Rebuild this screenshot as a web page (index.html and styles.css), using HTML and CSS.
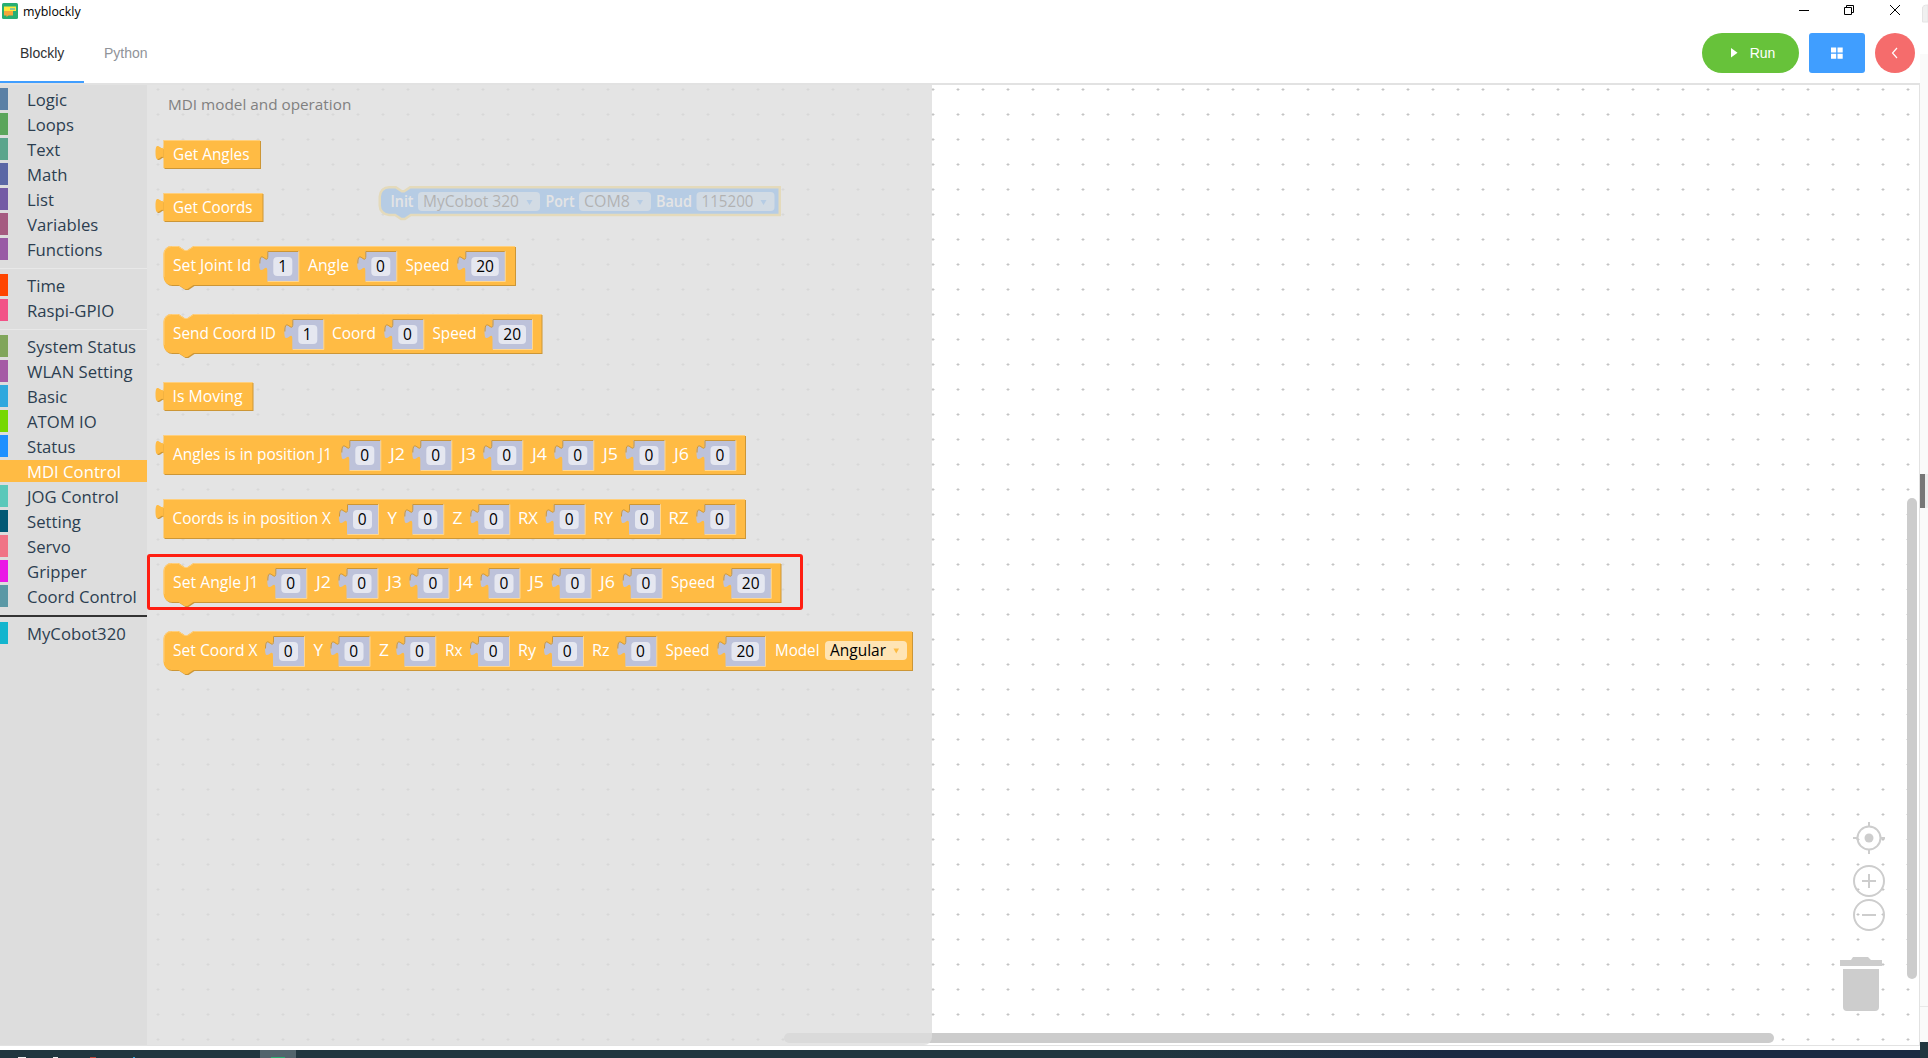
FILE: index.html
```
<!DOCTYPE html>
<html lang="en">
<head>
<meta charset="utf-8">
<title>myblockly</title>
<link rel="stylesheet" href="styles.css">
</head>
<body>
<svg class="defs" width="0" height="0" aria-hidden="true">
  <defs>
    <pattern id="grid" x="-4.5" y="2" width="25" height="25" patternUnits="userSpaceOnUse">
      <path d="M11 12.5h3M12.5 11v3" stroke="#c4c4c4" stroke-width="1"/>
    </pattern>
    <g id="tab"><path d="M0 20c0-10-8 8-8-7.5s8 2.5 8-7.5z"/></g>
    <g id="slot1">
      <path class="slot" d="M0 5H31.5V35.5H0V25c0-10-8 8-8-7.5s8 2.5 8-7.5z"/>
      <path class="slot-dark" d="M31 5.5H.5V10c0 10-8-8-8 7.5"/>
      <path class="slot-light" d="M.5 35.5H31.5V5.5"/>
      <rect class="slot-field" x="6" y="11" width="19" height="19" rx="4"/>
    </g>
    <g id="slot2">
      <path class="slot" d="M0 5H40V35.5H0V25c0-10-8 8-8-7.5s8 2.5 8-7.5z"/>
      <path class="slot-dark" d="M39.500 5.500H.5V10c0 10-8-8-8 7.500"/>
      <path class="slot-light" d="M.5 35.5H40V5.5"/>
      <rect class="slot-field" x="6" y="11" width="27.500" height="19" rx="4"/>
    </g>
  </defs>
</svg>
<div class="desktop">
<div class="app">
  <header class="titlebar">
    <svg class="logo" width="16" height="16" viewBox="0 0 16 16">
      <rect width="16" height="16" rx="1.500" fill="#27ae73"/>
      <path d="M2 3.500h12V8H2z" fill="#ffe93b"/>
      <path d="M2 8h9v4.500H6.500l-2 1.500v-1.500H2z" fill="#f6a63a"/>
      <path d="M8 5h5v2H8z" fill="#8ac79a"/>
    </svg>
    <span class="app-name">myblockly</span>
    <svg class="winbtns" width="104" height="12" viewBox="0 0 104 12" fill="none" stroke="#000">
      <path d="M0 6.500h10"/>
      <path d="M45.500 3.500h7v7h-7zM47.500 3.500v-2h7v7h-2"/>
      <path d="M91 1l10 10M101 1L91 11"/>
    </svg>
  </header>
  <div class="toolbar">
    <nav class="tabs">
      <span class="tab active">Blockly</span>
      <span class="tab">Python</span>
    </nav>
    <div class="actions">
      <button class="btn run">
        <svg width="7" height="10" viewBox="0 0 7 10"><path d="M0 0L6.500 4.700 0 9.500z" fill="#fff"/></svg>
        <span>Run</span>
      </button>
      <button class="btn tiles">
        <svg width="12" height="12" viewBox="0 0 12 12"><path d="M0 .5h5.200v5H0zM6.500.5h5.200v5H6.500zM0 6.700h5.200v5H0zM6.500 6.700h5.200v5H6.500z" fill="#fff"/></svg>
      </button>
      <button class="btn back">
        <svg width="8" height="12" viewBox="0 0 8 12"><path d="M6 1L1.500 6 6 11" fill="none" stroke="#fff" stroke-width="1.200"/></svg>
      </button>
    </div>
  </div>
  <main class="editor">
    <ul class="toolbox">
      <li class="c-logic">Logic</li>
      <li class="c-loops">Loops</li>
      <li class="c-text">Text</li>
      <li class="c-math">Math</li>
      <li class="c-list">List</li>
      <li class="c-vars">Variables</li>
      <li class="c-funcs">Functions</li>
      <li class="sep"></li>
      <li class="c-time">Time</li>
      <li class="c-gpio">Raspi-GPIO</li>
      <li class="sep"></li>
      <li class="c-system">System Status</li>
      <li class="c-wlan">WLAN Setting</li>
      <li class="c-basic">Basic</li>
      <li class="c-atom">ATOM IO</li>
      <li class="c-status">Status</li>
      <li class="c-mdi selected">MDI Control</li>
      <li class="c-jog">JOG Control</li>
      <li class="c-setting">Setting</li>
      <li class="c-servo">Servo</li>
      <li class="c-gripper">Gripper</li>
      <li class="c-coord">Coord Control</li>
      <li class="sep dark"></li>
      <li class="c-cobot">MyCobot320</li>
    </ul>
    <section class="workspace">
      <svg class="canvas" width="1772" height="960" viewBox="147 85 1772 960">
        <rect x="147" y="85" width="1772" height="960" fill="url(#grid)"/>
        <g class="init">
          <path class="init-body" d="M381 196.500a8 8 0 0 1 8-8h6.500l6 4h3l6-4H778.500V213.700H410.500l-6 4h-3l-6-4h-6.500a8 8 0 0 1-8-8z"/>
          <rect class="drop" x="418" y="192" width="122" height="19" rx="4"/>
          <rect class="drop" x="579" y="192" width="72" height="19" rx="4"/>
          <rect class="drop" x="696.500" y="192" width="78" height="19" rx="4"/>
          <path class="init-arrow" d="M526.500 200h6l-3 5zM637 200h6l-3 5zM760.500 200h6l-3 5z"/>
          <text class="bold" x="390.500" y="207" textLength="23" lengthAdjust="spacingAndGlyphs">Init</text>
          <text class="val" x="423" y="207" textLength="96" lengthAdjust="spacingAndGlyphs">MyCobot 320</text>
          <text class="bold" x="545.500" y="207" textLength="29" lengthAdjust="spacingAndGlyphs">Port</text>
          <text class="val" x="584" y="207" textLength="46" lengthAdjust="spacingAndGlyphs">COM8</text>
          <text class="bold" x="656" y="207" textLength="36" lengthAdjust="spacingAndGlyphs">Baud</text>
          <text class="val" x="701.500" y="207" textLength="52" lengthAdjust="spacingAndGlyphs">115200</text>
        </g>
        <g class="controls" fill="none">
          <circle cx="1869" cy="838" r="11.500"/><circle cx="1869" cy="838" r="4.500" class="solid"/>
          <path d="M1869 822v4M1869 850v4M1853 838h4M1881 838h4"/>
          <circle cx="1869" cy="881" r="15"/><path d="M1862 881h14M1869 874v14"/>
          <circle cx="1869" cy="915" r="15"/><path d="M1862 915h14"/>
          <path class="solid" d="M1840 960h11l2-3h15l3 3h11v6h-42zM1843 969h36v38a4 4 0 0 1-4 4h-28a4 4 0 0 1-4-4z"/>
        </g>
        <rect class="bar" x="1907" y="498" width="10" height="481" rx="5"/>
        <rect class="bar" x="784" y="1033" width="990" height="10" rx="5"/>
      </svg>
      <div class="flyout">
        <h2 class="flyout-title">MDI model and operation</h2>

        <svg class="block" width="785" height="29" viewBox="147 0 785 29">
          <g class="body"><path d="M163.500 0H260V28H163.500z"/><use href="#tab" x="163.500"/></g>
          <path class="hi" d="M163.500 .5H260"/>
          <text x="173" y="20" textLength="76.500" lengthAdjust="spacingAndGlyphs">Get Angles</text>
        </svg>

        <svg class="block" width="785" height="29" viewBox="147 0 785 29">
          <g class="body"><path d="M163.500 0H262.500V28H163.500z"/><use href="#tab" x="163.500"/></g>
          <path class="hi" d="M163.500 .5H262.500"/>
          <text x="173" y="20" textLength="79.500" lengthAdjust="spacingAndGlyphs">Get Coords</text>
        </svg>

        <svg class="block" width="785" height="44" viewBox="147 0 785 44">
          <path class="body" d="M163.500 8a8 8 0 0 1 8-8h7l6 4h3l6-4H515V39H193.500l-6 4h-3l-6-4h-7a8 8 0 0 1-8-8z"/>
          <path class="hi" d="M164 31V8a7.500 7.500 0 0 1 7.500-7.500h7l6 4h3l6-4H515"/>
          <use href="#slot1" x="267.300"/><use href="#slot1" x="365.300"/><use href="#slot2" x="465.300"/>
          <text x="173" y="25" textLength="78" lengthAdjust="spacingAndGlyphs">Set Joint Id</text>
          <text class="num" x="282.800" y="26">1</text>
          <text x="308" y="25" textLength="41" lengthAdjust="spacingAndGlyphs">Angle</text>
          <text class="num" x="380.500" y="26">0</text>
          <text x="405.500" y="25" textLength="44" lengthAdjust="spacingAndGlyphs">Speed</text>
          <text class="num" x="485" y="26">20</text>
        </svg>

        <svg class="block" width="785" height="44" viewBox="147 0 785 44">
          <path class="body" d="M163.500 8a8 8 0 0 1 8-8h7l6 4h3l6-4H541.500V39H193.500l-6 4h-3l-6-4h-7a8 8 0 0 1-8-8z"/>
          <path class="hi" d="M164 31V8a7.500 7.500 0 0 1 7.500-7.500h7l6 4h3l6-4H541.500"/>
          <use href="#slot1" x="292.300"/><use href="#slot1" x="392.300"/><use href="#slot2" x="492.500"/>
          <text x="173" y="25" textLength="103" lengthAdjust="spacingAndGlyphs">Send Coord ID</text>
          <text class="num" x="307.300" y="26">1</text>
          <text x="332" y="25" textLength="44" lengthAdjust="spacingAndGlyphs">Coord</text>
          <text class="num" x="407.500" y="26">0</text>
          <text x="432.500" y="25" textLength="44" lengthAdjust="spacingAndGlyphs">Speed</text>
          <text class="num" x="512.200" y="26">20</text>
        </svg>

        <svg class="block" width="785" height="29" viewBox="147 0 785 29">
          <g class="body"><path d="M163.500 0H252.500V28H163.500z"/><use href="#tab" x="163.500"/></g>
          <path class="hi" d="M163.500 .5H252.500"/>
          <text x="172.500" y="20" textLength="70" lengthAdjust="spacingAndGlyphs">Is Moving</text>
        </svg>

        <svg class="block" width="785" height="40" viewBox="147 0 785 40">
          <g class="body"><path d="M163.500 0H745V39H163.500z"/><use href="#tab" x="163.500"/></g>
          <path class="hi" d="M163.500 .5H745"/>
          <use href="#slot1" x="349.300"/><use href="#slot1" x="420.300"/><use href="#slot1" x="491.300"/>
          <use href="#slot1" x="562.300"/><use href="#slot1" x="633.500"/><use href="#slot1" x="704.500"/>
          <text x="173" y="25" textLength="159" lengthAdjust="spacingAndGlyphs">Angles is in position J1</text>
          <text class="num" x="364.800" y="26">0</text>
          <text x="390" y="25" textLength="15" lengthAdjust="spacingAndGlyphs">J2</text>
          <text class="num" x="435.800" y="26">0</text>
          <text x="461" y="25" textLength="15" lengthAdjust="spacingAndGlyphs">J3</text>
          <text class="num" x="506.800" y="26">0</text>
          <text x="532" y="25" textLength="15" lengthAdjust="spacingAndGlyphs">J4</text>
          <text class="num" x="577.800" y="26">0</text>
          <text x="603" y="25" textLength="15" lengthAdjust="spacingAndGlyphs">J5</text>
          <text class="num" x="649" y="26">0</text>
          <text x="674" y="25" textLength="15" lengthAdjust="spacingAndGlyphs">J6</text>
          <text class="num" x="720" y="26">0</text>
        </svg>

        <svg class="block" width="785" height="40" viewBox="147 0 785 40">
          <g class="body"><path d="M163.500 0H745V39H163.500z"/><use href="#tab" x="163.500"/></g>
          <path class="hi" d="M163.500 .5H745"/>
          <use href="#slot1" x="347"/><use href="#slot1" x="412.300"/><use href="#slot1" x="478.300"/>
          <use href="#slot1" x="553.700"/><use href="#slot1" x="629"/><use href="#slot1" x="704.300"/>
          <text x="172.500" y="25" textLength="158.500" lengthAdjust="spacingAndGlyphs">Coords is in position X</text>
          <text class="num" x="362.300" y="26">0</text>
          <text x="387.500" y="25" textLength="9.500" lengthAdjust="spacingAndGlyphs">Y</text>
          <text class="num" x="427.800" y="26">0</text>
          <text x="452.500" y="25" textLength="10" lengthAdjust="spacingAndGlyphs">Z</text>
          <text class="num" x="493.500" y="26">0</text>
          <text x="518" y="25" textLength="20" lengthAdjust="spacingAndGlyphs">RX</text>
          <text class="num" x="569.300" y="26">0</text>
          <text x="593.500" y="25" textLength="19.500" lengthAdjust="spacingAndGlyphs">RY</text>
          <text class="num" x="644.300" y="26">0</text>
          <text x="668.500" y="25" textLength="20" lengthAdjust="spacingAndGlyphs">RZ</text>
          <text class="num" x="719.500" y="26">0</text>
        </svg>

        <svg class="block" width="785" height="44" viewBox="147 0 785 44">
          <path class="body" d="M163.500 8a8 8 0 0 1 8-8h7l6 4h3l6-4H780.500V39H193.500l-6 4h-3l-6-4h-7a8 8 0 0 1-8-8z"/>
          <path class="hi" d="M164 31V8a7.500 7.500 0 0 1 7.500-7.500h7l6 4h3l6-4H780.500"/>
          <use href="#slot1" x="275.300"/><use href="#slot1" x="346.500"/><use href="#slot1" x="417.500"/>
          <use href="#slot1" x="488.500"/><use href="#slot1" x="559.700"/><use href="#slot1" x="630.700"/><use href="#slot2" x="731.300"/>
          <text x="173" y="25" textLength="85.500" lengthAdjust="spacingAndGlyphs">Set Angle J1</text>
          <text class="num" x="290.800" y="26">0</text>
          <text x="316" y="25" textLength="15" lengthAdjust="spacingAndGlyphs">J2</text>
          <text class="num" x="361.800" y="26">0</text>
          <text x="387" y="25" textLength="15" lengthAdjust="spacingAndGlyphs">J3</text>
          <text class="num" x="433" y="26">0</text>
          <text x="458" y="25" textLength="15" lengthAdjust="spacingAndGlyphs">J4</text>
          <text class="num" x="504" y="26">0</text>
          <text x="529" y="25" textLength="15" lengthAdjust="spacingAndGlyphs">J5</text>
          <text class="num" x="575" y="26">0</text>
          <text x="600" y="25" textLength="15" lengthAdjust="spacingAndGlyphs">J6</text>
          <text class="num" x="646" y="26">0</text>
          <text x="671" y="25" textLength="44" lengthAdjust="spacingAndGlyphs">Speed</text>
          <text class="num" x="750.700" y="26">20</text>
        </svg>

        <svg class="block" width="785" height="44" viewBox="147 0 785 44">
          <path class="body" d="M163.500 8a8 8 0 0 1 8-8h7l6 4h3l6-4H912V39H193.500l-6 4h-3l-6-4h-7a8 8 0 0 1-8-8z"/>
          <path class="hi" d="M164 31V8a7.500 7.500 0 0 1 7.500-7.500h7l6 4h3l6-4H912"/>
          <use href="#slot1" x="273"/><use href="#slot1" x="338.500"/><use href="#slot1" x="404.300"/>
          <use href="#slot1" x="478"/><use href="#slot1" x="552"/><use href="#slot1" x="625.300"/><use href="#slot2" x="725.500"/>
          <text x="173" y="25" textLength="84.500" lengthAdjust="spacingAndGlyphs">Set Coord X</text>
          <text class="num" x="288.300" y="26">0</text>
          <text x="313.500" y="25" textLength="9.500" lengthAdjust="spacingAndGlyphs">Y</text>
          <text class="num" x="353.800" y="26">0</text>
          <text x="379" y="25" textLength="10" lengthAdjust="spacingAndGlyphs">Z</text>
          <text class="num" x="419.500" y="26">0</text>
          <text x="445" y="25" textLength="17.500" lengthAdjust="spacingAndGlyphs">Rx</text>
          <text class="num" x="493.300" y="26">0</text>
          <text x="518" y="25" textLength="18" lengthAdjust="spacingAndGlyphs">Ry</text>
          <text class="num" x="567.300" y="26">0</text>
          <text x="592" y="25" textLength="17.500" lengthAdjust="spacingAndGlyphs">Rz</text>
          <text class="num" x="640.500" y="26">0</text>
          <text x="665.500" y="25" textLength="44" lengthAdjust="spacingAndGlyphs">Speed</text>
          <text class="num" x="745.300" y="26">20</text>
          <text x="775" y="25" textLength="44.500" lengthAdjust="spacingAndGlyphs">Model</text>
          <rect x="825" y="10" width="82" height="19" rx="4" fill="#ffe4b4"/>
          <text class="choice" x="830" y="25" textLength="56" lengthAdjust="spacingAndGlyphs">Angular</text>
          <path d="M893.500 17.500h5.500l-2.750 5z" fill="#fdbb42"/>
        </svg>
        <div class="marker"></div>
      </div>
    </section>
  </main>
</div>
<aside class="edge">
  <svg width="8" height="24" viewBox="0 0 8 24"><path d="M2.500 22V8q0-3 5.500-3v17z" fill="#f0f0f0" stroke="#e4e4e4"/></svg>
  <div class="edge-page"><span class="edge-thumb"></span><span class="edge-line"></span></div>
</aside>
<footer class="taskbar">
  <svg width="300" height="8" viewBox="0 0 300 8">
    <rect x="260" width="36" height="8" fill="#52646c"/>
    <path d="M271 7h14v1h-14z" fill="#27ae73"/>
    <path d="M18 7h8v1h-8zM53 7h5v1h-5z" fill="#eee"/>
    <path d="M90 7h6v1h-6z" fill="#b9473c"/>
    <path d="M133 7h2v1h-2z" fill="#35a3d6"/>
  </svg>
</footer>
</div>
</body>
</html>
```
FILE: styles.css
```
* { box-sizing: border-box; }
body {
  margin: 0;
  background: #fff;
  font-family: "Liberation Sans", Arial, sans-serif;
  overflow: hidden;
}
.defs { position: absolute; }
.desktop {
  display: grid;
  grid-template-columns: 1920px 8px;
  grid-template-rows: 1050px 8px;
  width: 1928px;
  height: 1058px;
  background: #fff linear-gradient(#21363f, #21363f) 1920px 1042px / 8px 16px no-repeat;
}
.app { display: flex; flex-direction: column; }

/* title bar */
.titlebar { display: flex; height: 23px; padding-left: 2px; }
.logo { margin-top: 3px; }
.app-name {
  flex: 1;
  margin-left: 5px;
  font: 12.4px/23px "Open Sans", "Noto Sans", sans-serif;
  color: #000;
}
.winbtns { margin: 4px 17px 0 0; }

/* tab strip and buttons */
.toolbar {
  display: flex;
  justify-content: space-between;
  height: 60px;
}
.tabs { display: flex; }
.tab {
  height: 60px;
  padding: 0 20px;
  font-size: 14px;
  line-height: 60px;
  color: #909399;
}
.tab.active { width: 84px; color: #303133; border-bottom: 2px solid #409eff; }
.actions { display: flex; gap: 10px; padding: 10px 5px 0 0; }
.btn {
  display: flex;
  align-items: center;
  justify-content: center;
  height: 40px;
  padding: 0;
  border: 0;
  font: 14px "Liberation Sans", Arial, sans-serif;
  color: #fff;
}
.run { width: 97px; gap: 12px; padding-left: 5px; border-radius: 20px; background: #67c23a; }
.tiles { width: 56px; border-radius: 3px; background: #409eff; }
.back { width: 40px; border-radius: 50%; background: #f56c6c; }

/* editor */
.editor {
  display: flex;
  width: 1920px;
  height: 963px;
  border: solid #e2e2e2;
  border-width: 2px 1px 1px 0;
}
.toolbox {
  width: 147px;
  margin: 0;
  padding: 3px 0 0;
  list-style: none;
  background: #ddd;
  font: 16.7px/24px "Open Sans", "Noto Sans", sans-serif;
  color: #2c3e50;
}
.toolbox li {
  height: 22px;
  margin-bottom: 3px;
  padding-left: 19px;
  border-left: 8px solid;
  white-space: nowrap;
}
.toolbox li.sep { height: 1px; margin: 8px 0 5px; border: 0; background: #e8e8e8; }
.toolbox li.sep.dark { height: 2px; background: #333; }
.c-logic { border-color: #5b80a5 !important; }
.c-loops { border-color: #5ba55b !important; }
.c-text { border-color: #5ba58c !important; }
.c-math { border-color: #5b67a5 !important; }
.c-list { border-color: #745ba5 !important; }
.c-vars { border-color: #a55b80 !important; }
.c-funcs { border-color: #995ba5 !important; }
.c-time { border-color: #ff4500 !important; }
.c-gpio { border-color: #f25287 !important; }
.c-system { border-color: #80a55b !important; }
.c-wlan { border-color: #a55ba5 !important; }
.c-basic { border-color: #2fa8de !important; }
.c-atom { border-color: #76d800 !important; }
.c-status { border-color: #1e90ff !important; }
.c-mdi { border-color: #ffbb44 !important; }
.c-jog { border-color: #5bc8ba !important; }
.c-setting { border-color: #005874 !important; }
.c-servo { border-color: #f07486 !important; }
.c-gripper { border-color: #ea18e6 !important; }
.c-coord { border-color: #5b98a5 !important; }
.c-cobot { border-color: #13b5ce !important; }
.selected { background: #ffbb44; color: #fff; }

.workspace { position: relative; width: 1772px; height: 960px; }
.canvas { display: block; }
.controls { stroke: #cdcdcd; stroke-width: 2; }
.controls .solid { fill: #cdcdcd; stroke: none; }
.bar { fill: #ccc; }
.init-body { fill: #1a88ff; stroke: #fc3; stroke-width: 5; paint-order: stroke; }
.drop { fill: #fff; fill-opacity: .6; }
.init-arrow { fill: #1a88ff; }
.init text { font: 15.500px "Open Sans", "Noto Sans", sans-serif; }
.init .bold { font-weight: 600; fill: #fff; }
.init .val { fill: #000; }

/* the flyout floats above the workspace canvas */
.flyout {
  position: absolute;
  top: 0;
  left: 0;
  display: flex;
  flex-direction: column;
  gap: 24px;
  width: 785px;
  height: 960px;
  border-radius: 0 0 8px 0;
  background: rgba(221, 221, 221, .8);
}
.flyout-title {
  height: 31px;
  margin: 0;
  padding: 8px 0 0 21px;
  font: 15.300px/22px "Open Sans", "Noto Sans", sans-serif;
  color: #808080;
}
.block { display: block; flex: none; overflow: visible; }
.block .body { fill: #ffbb44; filter: drop-shadow(1px 1px 0 #cc9636); }
.hi { fill: none; stroke: #ffcf7c; }
.block text { font: 15.500px "Open Sans", "Noto Sans", sans-serif; fill: #fff; }
.block .num { text-anchor: middle; fill: #000; }
.block .choice { fill: #000; }
.slot { fill: #bdc2da; }
.slot-dark { fill: none; stroke: #cc9636; }
.slot-light { fill: none; stroke: #ffd78f; }
.slot-field { fill: #e5e7f0; }
.marker {
  position: absolute;
  top: 469px;
  left: 0;
  width: 656px;
  height: 56px;
  border: 3px solid #ff1e12;
  border-radius: 3px;
}

/* strip of the window behind, and the system taskbar */
.edge { display: flex; flex-direction: column; height: 1042px; background: #fff; }
.edge-page {
  display: flex;
  flex-direction: column;
  flex: 1;
  margin-top: 30px;
  padding-top: 420px;
  background: #fafafa;
}
.edge-thumb { height: 34px; border-left: 5px solid #777; background: #ededed; }
.edge-line { height: 1px; margin-top: 498px; background: #e8e8e8; }
.taskbar {
  grid-column: 1 / 3;
  display: flex;
  background: linear-gradient(90deg, #21363f 60%, #1b2942 75%, #1b2942 1920px, #21363f 1920px);
}
```
